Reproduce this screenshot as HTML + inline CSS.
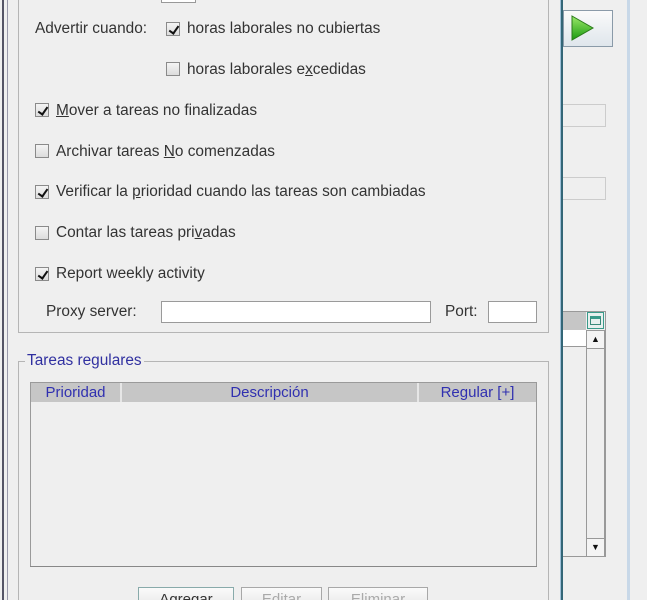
<!DOCTYPE html>
<html><head><meta charset="utf-8"><style>
*{margin:0;padding:0;box-sizing:border-box}
html,body{width:647px;height:600px;overflow:hidden}
body{background:#efefef;position:relative;font-family:"Liberation Sans",sans-serif;font-size:15.4px;color:#333}
.a{position:absolute}
.cb{position:absolute;width:14px;height:14px;border:1px solid #8a8a8a;background:linear-gradient(#f4f4f4,#dcdcdc)}
.cb.on::after{content:"";position:absolute;left:4px;top:1px;width:4px;height:8px;border-right:2px solid #111;border-bottom:2px solid #111;transform:rotate(35deg)}
.t{position:absolute;white-space:nowrap;line-height:16px}
.f{position:absolute;background:#fff;border:1px solid #9a9a9a}
.h{position:absolute;top:0;height:19px;background:#c6c6c6;border-right:2px solid #e6e6e6;color:#3030b0;text-align:center;line-height:19px;font-size:15px}
.btn{position:absolute;top:587px;height:24px;border:1px solid #a8a8a8;background:linear-gradient(#fafafa,#e6e6e6);text-align:center;line-height:24px;font-size:15px;color:#aaa}
</style></head><body>
<div class="a" style="left:2px;top:0;width:2px;height:600px;background:#556"></div>
<div class="a" style="left:7px;top:0;width:1px;height:600px;background:#99a"></div>
<div class="a" style="left:18px;top:-2px;width:531px;height:335px;border:1px solid #b5b5b5"></div>
<div class="a" style="left:161px;top:0;width:35px;height:3px;border:1px solid #999;border-top:none;background:#fff"></div>

<div class="t" style="left:35px;top:21px">Advertir cuando:</div>
<div class="cb on" style="left:166px;top:22px"></div><div class="t" style="left:187px;top:21px">horas laborales no cubiertas</div>
<div class="cb" style="left:166px;top:62px"></div><div class="t" style="left:187px;top:62px">horas laborales e<u>x</u>cedidas</div>
<div class="cb on" style="left:35px;top:103px"></div><div class="t" style="left:56px;top:103px"><u>M</u>over a tareas no finalizadas</div>
<div class="cb" style="left:35px;top:144px"></div><div class="t" style="left:56px;top:144px">Archivar tareas <u>N</u>o comenzadas</div>
<div class="cb on" style="left:35px;top:185px"></div><div class="t" style="left:56px;top:184px">Verificar la <u>p</u>rioridad cuando las tareas son cambiadas</div>
<div class="cb" style="left:35px;top:226px"></div><div class="t" style="left:56px;top:225px">Contar las tareas pri<u>v</u>adas</div>
<div class="cb on" style="left:35px;top:267px"></div><div class="t" style="left:56px;top:266px">Report weekly activity</div>
<div class="t" style="left:46px;top:304px">Proxy server:</div>
<div class="f" style="left:161px;top:301px;width:270px;height:22px"></div>
<div class="t" style="left:445px;top:304px">Port:</div>
<div class="f" style="left:488px;top:301px;width:49px;height:22px"></div>

<div class="a" style="left:18px;top:361px;width:531px;height:260px;border:1px solid #b5b5b5"></div>
<div class="t" style="left:25px;top:353px;background:#efefef;color:#3030a0;padding:0 2px">Tareas regulares</div>
<div class="a" style="left:30px;top:382px;width:507px;height:185px;border:1px solid #9a9a9a">
<div class="h" style="left:0;width:91px">Prioridad</div>
<div class="h" style="left:91px;width:297px">Descripción</div>
<div class="h" style="left:388px;width:117px;border-right:none">Regular [+]</div>
</div>
<div class="a" style="left:30px;top:566px;width:507px;height:1px;background:#888"></div>
<div class="btn" style="left:138px;width:96px;border-color:#8aa;color:#333">Agregar</div>
<div class="btn" style="left:241px;width:81px">Editar</div>
<div class="btn" style="left:328px;width:100px">Eliminar</div>

<div class="a" style="left:560px;top:0;width:3px;height:600px;background:#9ec0d8"></div>
<div class="a" style="left:561px;top:0;width:2px;height:600px;background:#336677"></div>
<div class="a" style="left:627px;top:0;width:3px;height:600px;background:#c8d8e8"></div>
<div class="a" style="left:563px;top:10px;width:50px;height:37px;border:1px solid #8a9aa8;background:linear-gradient(#fafafa,#dfe6ec)">
<svg width="30" height="30" style="position:absolute;left:5px;top:3px"><defs><linearGradient id="g" x1="0" y1="0" x2="0" y2="1"><stop offset="0" stop-color="#9be86a"/><stop offset="1" stop-color="#1a9a10"/></linearGradient></defs><path d="M3 2 L24 14 L3 26 Z" fill="url(#g)" stroke="#2a7a1a" stroke-width="1"/></svg></div>
<div class="a" style="left:563px;top:104px;width:43px;height:23px;border:1px solid #ccc;border-left:none"></div>
<div class="a" style="left:563px;top:177px;width:43px;height:23px;border:1px solid #ccc;border-left:none"></div>
<div class="a" style="left:563px;top:311px;width:43px;height:246px;border:1px solid #999;border-left:none"></div>
<div class="a" style="left:563px;top:312px;width:23px;height:18px;background:#c6c6c6"></div>
<div class="a" style="left:563px;top:330px;width:23px;height:17px;background:#fff;border-bottom:1px solid #999"></div>
<div class="a" style="left:587px;top:312px;width:17px;height:17px;background:#e8f0ee;border:1px solid #3a9a8a"><div style="margin:3px 2px;height:9px;border:1px solid #3a8a7a;border-top:3px solid #3a9a8a"></div></div>
<div class="a" style="left:586px;top:330px;width:19px;height:227px;border:1px solid #999;background:#efefef"></div>
<div class="a" style="left:586px;top:330px;width:19px;height:19px;border:1px solid #999;background:#f4f4f4;font-size:9px;text-align:center;line-height:17px;color:#111">▲</div>
<div class="a" style="left:586px;top:538px;width:19px;height:19px;border:1px solid #999;background:#f4f4f4;font-size:9px;text-align:center;line-height:17px;color:#111">▼</div>
</body></html>
